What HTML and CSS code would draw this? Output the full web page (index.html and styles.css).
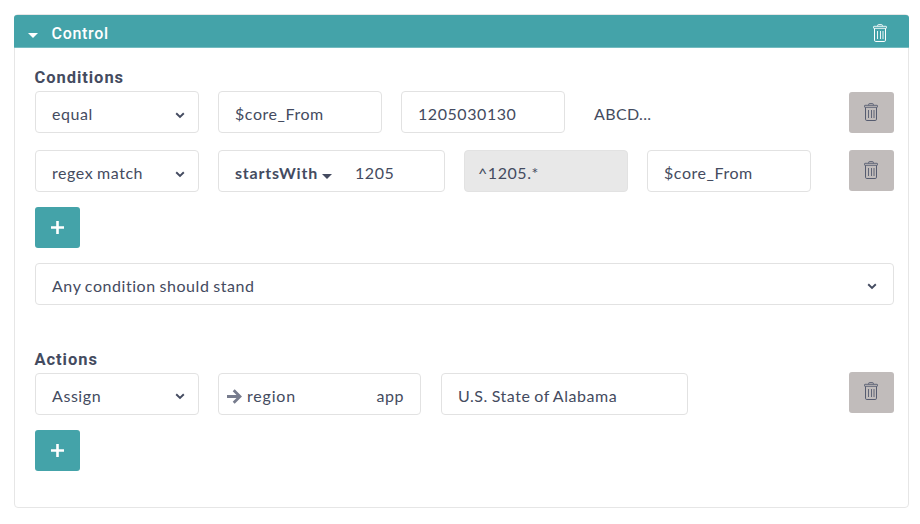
FILE: index.html
```html
<!DOCTYPE html>
<html lang="en">
<head>
<meta charset="utf-8">
<title>Control</title>
<link rel="stylesheet" href="styles.css">
</head>
<body>
<svg class="defs" width="0" height="0" aria-hidden="true">
  <symbol id="trash" viewBox="0 0 14 18">
    <g fill="none" stroke="currentColor">
      <path d="M4.7 2.2V1.3Q4.7.6 5.4.6h3.2q.7 0 .7.7v.9" stroke-width=".9"/>
      <rect x=".5" y="2.3" width="13" height="2" rx=".5" stroke-width=".9"/>
      <path d="M1.5 4.4v11.8q0 1.3 1.3 1.3h8.4q1.3 0 1.3-1.3V4.4" stroke-width="1"/>
      <path d="M4.5 7v8M7.5 7v8M10 7v8" stroke-width=".9"/>
    </g>
  </symbol>
  <symbol id="chevron" viewBox="0 0 10 7">
    <path d="M1.2 1.3 5 5l3.8-3.7" fill="none" stroke="currentColor" stroke-width="1.9"/>
  </symbol>
  <symbol id="caret" viewBox="0 0 10 5"><path d="M0 0h10L5 5z" fill="currentColor"/></symbol>
  <symbol id="plus" viewBox="0 0 13 13"><path d="M6.5 0v13M0 6.5h13" fill="none" stroke="currentColor" stroke-width="2.6"/></symbol>
  <symbol id="arrow" viewBox="0 0 15 15"><path d="M0 7.5h13M6.7 1.2 13 7.5l-6.3 6.3" fill="none" stroke="currentColor" stroke-width="2.8"/></symbol>
</svg>
<main class="panel">
  <header class="panel-header">
    <svg class="caret"><use href="#caret"/></svg>
    <span class="panel-title">Control</span>
    <svg class="trash"><use href="#trash"/></svg>
  </header>
  <div class="panel-body">
    <section class="conditions">
      <h2>Conditions</h2>
      <div class="row first">
        <div class="field select"><span>equal</span><svg class="chevron"><use href="#chevron"/></svg></div>
        <div class="field">$core_From</div>
        <div class="field">1205030130</div>
        <span class="preview">ABCD...</span>
        <button class="button remove" aria-label="Remove"><svg class="trash"><use href="#trash"/></svg></button>
      </div>
      <div class="row second">
        <div class="field select"><span>regex match</span><svg class="chevron"><use href="#chevron"/></svg></div>
        <div class="field matcher"><b>startsWith</b><svg class="caret"><use href="#caret"/></svg><span>1205</span></div>
        <div class="field disabled">^1205.*</div>
        <div class="field">$core_From</div>
        <button class="button remove" aria-label="Remove"><svg class="trash"><use href="#trash"/></svg></button>
      </div>
      <button class="button add" aria-label="Add"><svg class="plus"><use href="#plus"/></svg></button>
      <div class="field select wide"><span>Any condition should stand</span><svg class="chevron"><use href="#chevron"/></svg></div>
    </section>
    <section class="actions">
      <h2>Actions</h2>
      <div class="row">
        <div class="field select"><span>Assign</span><svg class="chevron"><use href="#chevron"/></svg></div>
        <div class="field target"><svg class="arrow"><use href="#arrow"/></svg><span class="name">region</span><span class="scope">app</span></div>
        <div class="field value">U.S. State of Alabama</div>
        <button class="button remove" aria-label="Remove"><svg class="trash"><use href="#trash"/></svg></button>
      </div>
      <button class="button add" aria-label="Add"><svg class="plus"><use href="#plus"/></svg></button>
    </section>
  </div>
</main>
</body>
</html>
```
FILE: styles.css
```css
* { box-sizing: border-box; }
body {
  margin: 0;
  padding: 14px 11px 0 14px;
  background: #fff;
  color: #444b60;
  font: 16px/20px Lato, sans-serif;
  letter-spacing: .56px;
  word-spacing: -.9px;
}
svg { display: block; flex: none; }
.defs { position: absolute; }
.panel {
  height: 494px;
  border: 1px solid #e6e6e6;
  border-radius: 4px;
}
.panel-header {
  display: flex;
  align-items: center;
  height: 33px;
  margin: 0 -1px 0 -1.5px;
  padding: 5px 22px 0 14px;
  border-bottom: 1px solid #74bbc0;
  border-radius: 3px 3px 0 0;
  background: #44a3a9;
  color: #fff;
}
.caret { width: 10px; height: 5px; margin-top: 4.5px; }
.panel-title {
  flex: 1;
  margin-left: 14px;
  font-family: Roboto, sans-serif;
  font-weight: 500;
  letter-spacing: .7px;
}
.trash { width: 14px; height: 18px; }
.panel-header .trash { margin-top: -1px; }
.panel-body { padding: 20px 14px 0 20px; }
h2 {
  margin: 0 0 0 -.5px;
  font: 700 16.5px/20px Roboto, sans-serif;
  letter-spacing: .95px;
}
.row { display: flex; gap: 19px; margin-top: 3px; }
.row.second { margin-top: 17px; }
.row.first .remove { margin-top: 1px; }
.field {
  display: flex;
  align-items: center;
  width: 164px;
  height: 42px;
  padding: 4px 16px 0;
  border: 1px solid #e2e2e2;
  border-radius: 4px;
  background: #fff;
  white-space: nowrap;
}
.select { justify-content: space-between; padding-right: 13px; }
.chevron { width: 10px; height: 7px; margin-top: 2px; }
.field.wide { width: 859px; margin-top: 15px; padding: 4px 16.5px 0 16px; }
.matcher { width: 227px; }
.matcher b { letter-spacing: .8px; }
.matcher .caret { margin: 6px 23px 0 4px; }
.disabled { padding-left: 13px; background: #e8e8e8; border-color: #e2e2e2; }
.target { width: 203px; padding-left: 8px; }
.name { letter-spacing: .8px; }
.arrow { width: 15px; height: 15px; margin: 2px 5px 0 0; color: #777c8d; }
.scope { margin-left: auto; }
.value { width: 247px; margin-left: 1px; }
.preview { padding: 13px 0 0 10px; letter-spacing: .35px; }
.button {
  display: flex;
  align-items: center;
  justify-content: center;
  width: 45px;
  height: 41px;
  padding: 0;
  border: 0;
  border-radius: 3px;
  color: #fff;
}
.remove { margin-left: auto; padding: 0 1px 2px 0; background: #c1bcbb; color: #565c70; }
.add { margin-top: 15.5px; padding-bottom: 1px; background: #44a3a9; }
.conditions .field.wide { margin-top: 14.5px; }
.plus { width: 13px; height: 13px; }
.actions { margin-top: 45px; }
.actions .row { align-items: flex-start; margin-top: 3px; }
.actions .remove { margin-top: -1px; }
.conditions .add { margin-top: 15px; }
```
